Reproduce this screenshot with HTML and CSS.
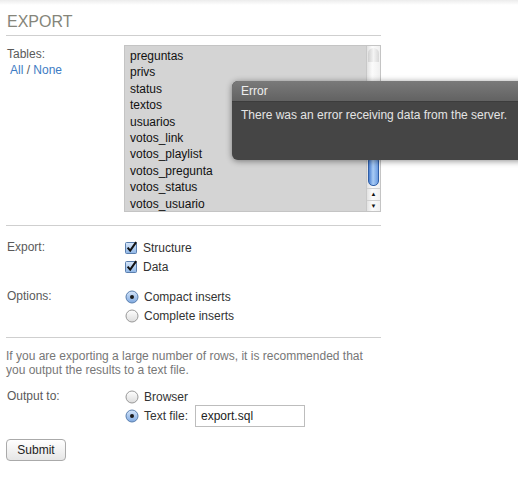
FILE: index.html
```html
<!DOCTYPE html>
<html lang="en">
<head>
    <meta charset="UTF-8">
    <meta name="viewport" content="width=device-width, initial-scale=1.0">
    <title>Export</title>
    <link rel="stylesheet" href="styles.css">
</head>
<body>
    <div class="export-panel">
        <h2 class="panel-title">EXPORT</h2>

        <div class="field-row tables-row">
            <div class="field-label">
                Tables:
                <div class="select-links"><a href="#">All</a> / <a href="#">None</a></div>
            </div>
            <div class="table-list">
                <ul class="table-items">
                    <li>preguntas</li>
                    <li>privs</li>
                    <li>status</li>
                    <li>textos</li>
                    <li>usuarios</li>
                    <li>votos_link</li>
                    <li>votos_playlist</li>
                    <li>votos_pregunta</li>
                    <li>votos_status</li>
                    <li>votos_usuario</li>
                </ul>
                <div class="scrollbar">
                    <div class="scroll-cap"></div>
                    <div class="scroll-track">
                        <div class="scroll-thumb"></div>
                    </div>
                    <div class="scroll-arrow">&#9650;</div>
                    <div class="scroll-arrow down">&#9660;</div>
                </div>
            </div>
        </div>

        <hr class="divider">

        <div class="field-row export-row">
            <div class="field-label">Export:</div>
            <div class="options">
                <label class="option">
                    <svg class="box" width="13" height="13" viewBox="0 0 13 13"><defs><linearGradient id="cb" x1="0" y1="0" x2="0" y2="1"><stop offset="0" stop-color="#d9e8fa"/><stop offset="1" stop-color="#8fb6e6"/></linearGradient></defs><rect x="0.5" y="1.5" width="11" height="11" rx="1" fill="url(#cb)" stroke="#5b7fae"/><path d="M2.6 6.6 L5.2 9.6 L11.2 1.2" fill="none" stroke="#111" stroke-width="2"/></svg>
                    Structure
                </label>
                <label class="option">
                    <svg class="box" width="13" height="13" viewBox="0 0 13 13"><rect x="0.5" y="1.5" width="11" height="11" rx="1" fill="url(#cb)" stroke="#5b7fae"/><path d="M2.6 6.6 L5.2 9.6 L11.2 1.2" fill="none" stroke="#111" stroke-width="2"/></svg>
                    Data
                </label>
            </div>
        </div>

        <div class="field-row options-row">
            <div class="field-label">Options:</div>
            <div class="options">
                <label class="option">
                    <svg class="box" width="14" height="14" viewBox="0 0 14 14"><defs><linearGradient id="rb" x1="0" y1="0" x2="0" y2="1"><stop offset="0" stop-color="#d6e6fa"/><stop offset="1" stop-color="#7fa9e0"/></linearGradient><linearGradient id="rw" x1="0" y1="0" x2="0" y2="1"><stop offset="0" stop-color="#fff"/><stop offset="1" stop-color="#dcdcdc"/></linearGradient></defs><circle cx="7" cy="7" r="6" fill="url(#rb)" stroke="#5a7fae"/><circle cx="7" cy="7" r="2" fill="#1a1a1a"/></svg>
                    Compact inserts
                </label>
                <label class="option">
                    <svg class="box" width="14" height="14" viewBox="0 0 14 14"><circle cx="7" cy="7" r="6" fill="url(#rw)" stroke="#999"/></svg>
                    Complete inserts
                </label>
            </div>
        </div>

        <hr class="divider">

        <p class="hint">If you are exporting a large number of rows, it is recommended that you output the results to a text file.</p>

        <div class="field-row output-row">
            <div class="field-label">Output to:</div>
            <div class="options">
                <label class="option">
                    <svg class="box" width="14" height="14" viewBox="0 0 14 14"><circle cx="7" cy="7" r="6" fill="url(#rw)" stroke="#999"/></svg>
                    Browser
                </label>
                <label class="option">
                    <svg class="box" width="14" height="14" viewBox="0 0 14 14"><circle cx="7" cy="7" r="6" fill="url(#rb)" stroke="#5a7fae"/><circle cx="7" cy="7" r="2" fill="#1a1a1a"/></svg>
                    Text file:
                    <input type="text" class="file-input" value="export.sql">
                </label>
            </div>
        </div>

        <button type="button" class="submit-button">Submit</button>
    </div>

    <div class="error-popup">
        <div class="error-title">Error</div>
        <div class="error-body">There was an error receiving data from the server.</div>
    </div>
</body>
</html>
```

FILE: styles.css
```css
html {
    overflow: hidden;
}

body {
    margin: 0;
    font-family: "Liberation Sans", Arial, sans-serif;
    font-size: 12px;
    color: #333;
    background: linear-gradient(#ececec, #fff 5px) no-repeat;
    min-height: 480px;
    position: relative;
}

.export-panel {
    width: 375px;
    padding: 12px 6px 0;
}

.panel-title {
    margin: 0;
    padding: 0 0 3px 1px;
    font-size: 16px;
    line-height: 20px;
    font-weight: normal;
    color: #85857a;
    border-bottom: 1px solid #cfcfcf;
}

.divider {
    border: none;
    border-top: 1px solid #cfcfcf;
    margin: 0;
}

/* label column + control column */
.field-row {
    display: grid;
    grid-template-columns: 118px 1fr;
}

.field-label {
    padding-left: 1px;
    color: #5a5a5a;
    line-height: 19px;
}

.tables-row {
    margin: 9px 0 13px;
}

.tables-row .field-label {
    line-height: 16px;
    padding-top: 1px;
}

.select-links {
    padding-left: 3px;
}

.select-links a {
    color: #3d7cc4;
    text-decoration: none;
}

.table-list {
    display: flex;
    height: 165px;
    border: 1px solid #c4c4c4;
    background-color: #d4d4d4;
}

.table-items {
    list-style: none;
    margin: 0;
    padding: 2px 0 0 5px;
    flex: 1;
    overflow: hidden;
    color: #111;
    line-height: 16.4px;
}

/* fake aqua scrollbar */
.scrollbar {
    width: 13px;
    display: flex;
    flex-direction: column;
    background: linear-gradient(to right, #e2e2e2, #fbfbfb 40%, #f0f0f0);
    border-left: 1px solid #c8c8c8;
}

.scroll-cap {
    height: 14px;
    margin: 2px 1px 0;
    border-radius: 6px 6px 0 0;
    background: linear-gradient(to right, #cfcfcf, #f4f4f4 50%, #d8d8d8);
}

.scroll-track {
    flex: 1;
    display: flex;
    align-items: flex-end;
    justify-content: center;
    padding-bottom: 2px;
}

.scroll-thumb {
    width: 9px;
    height: 28px;
    border: 1px solid #2f5ea6;
    border-radius: 5px;
    background: linear-gradient(to right, #4b7fd0, #a9ccf5 45%, #6b9be0);
}

.scroll-arrow {
    height: 11px;
    font-size: 6px;
    line-height: 11px;
    text-align: center;
    color: #111;
    border-top: 1px solid #d0d0d0;
}

.scroll-arrow.down {
    height: 10px;
}

.options {
    display: flex;
    flex-direction: column;
}

.option {
    display: flex;
    align-items: center;
    height: 19px;
    color: #333;
}

.option .box {
    margin: 0 5px 0 1px;
    flex-shrink: 0;
}

.export-row {
    margin-top: 12px;
}

.options-row {
    margin: 11px 0 12px;
}

.hint {
    margin: 11px 0 10px;
    color: #777;
    line-height: 14px;
}

.file-input {
    margin-left: 7px;
    width: 110px;
    height: 22px;
    box-sizing: border-box;
    border: 1px solid #bdbdbd;
    padding: 0 5px;
    font-family: inherit;
    font-size: 12px;
    color: #222;
}

.submit-button {
    margin-top: 14px;
    width: 60px;
    height: 22px;
    border: 1px solid #aaa;
    border-radius: 4px;
    background: linear-gradient(#fff, #e6e6e6);
    font-family: inherit;
    font-size: 12px;
    color: #222;
    padding: 0;
}

/* overlay notification */
.error-popup {
    position: absolute;
    left: 232px;
    top: 81px;
    width: 300px;
    height: 79px;
    border-radius: 6px 0 0 6px;
    background-color: #454545;
    box-shadow: 0 1px 6px rgba(0, 0, 0, 0.45);
    overflow: hidden;
}

.error-title {
    height: 20px;
    line-height: 20px;
    padding-left: 9px;
    color: #eee;
    background: linear-gradient(#7a7a7a, #626262);
    border-bottom: 1px solid #3c3c3c;
}

.error-body {
    padding: 6px 9px;
    line-height: 14px;
    color: #e4e4e4;
}
```
